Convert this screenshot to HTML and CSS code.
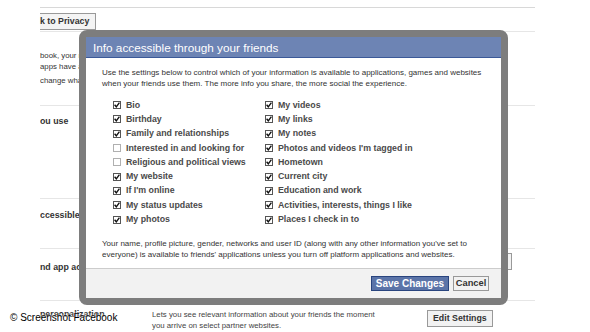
FILE: index.html
```html
<!DOCTYPE html>
<html lang="en">
<head>
    <meta charset="UTF-8">
    <title>Info accessible through your friends</title>
    <link rel="stylesheet" href="styles.css">
</head>
<body>
    <div class="page">
        <div class="back-row">
            <span class="back-btn">k to Privacy</span>
        </div>
        <div class="sec sec-intro">
            <p>book, your name, profile picture and friends</p>
            <p>apps have access to this info</p>
            <p class="gap">change what you share with apps</p>
        </div>
        <div class="sec sec-apps">
            <p class="title">ou use</p>
        </div>
        <div class="sec sec-info">
            <p class="title">ccessible through your friends</p>
        </div>
        <div class="sec sec-platform">
            <p class="title">nd app activity</p>
            <span class="small-btn">Edit</span>
        </div>
        <div class="sec sec-personal">
            <p class="title">personalization</p>
            <p class="desc">Lets you see relevant information about your friends the moment<br>you arrive on select partner websites.</p>
            <span class="edit-btn">Edit Settings</span>
        </div>
    </div>

    <div class="dialog">
        <div class="dialog-inner">
            <div class="dialog-head">Info accessible through your friends</div>
            <div class="dialog-body">
                <p class="intro">Use the settings below to control which of your information is available to applications, games and websites<br>when your friends use them. The more info you share, the more social the experience.</p>
                <div class="checks">
                    <div class="col">
                        <label class="row"><span class="box on"></span>Bio</label>
                        <label class="row"><span class="box on"></span>Birthday</label>
                        <label class="row"><span class="box on"></span>Family and relationships</label>
                        <label class="row"><span class="box"></span>Interested in and looking for</label>
                        <label class="row"><span class="box"></span>Religious and political views</label>
                        <label class="row"><span class="box on"></span>My website</label>
                        <label class="row"><span class="box on"></span>If I'm online</label>
                        <label class="row"><span class="box on"></span>My status updates</label>
                        <label class="row"><span class="box on"></span>My photos</label>
                    </div>
                    <div class="col">
                        <label class="row"><span class="box on"></span>My videos</label>
                        <label class="row"><span class="box on"></span>My links</label>
                        <label class="row"><span class="box on"></span>My notes</label>
                        <label class="row"><span class="box on"></span>Photos and videos I'm tagged in</label>
                        <label class="row"><span class="box on"></span>Hometown</label>
                        <label class="row"><span class="box on"></span>Current city</label>
                        <label class="row"><span class="box on"></span>Education and work</label>
                        <label class="row"><span class="box on"></span>Activities, interests, things I like</label>
                        <label class="row"><span class="box on"></span>Places I check in to</label>
                    </div>
                </div>
                <p class="note">Your name, profile picture, gender, networks and user ID (along with any other information you've set to<br>everyone) is available to friends' applications unless you turn off platform applications and websites.</p>
            </div>
            <div class="dialog-foot">
                <span class="btn btn-save">Save Changes</span>
                <span class="btn btn-cancel">Cancel</span>
            </div>
        </div>
    </div>

    <div class="watermark">© Screenshot Facebook</div>
</body>
</html>
```
FILE: styles.css
```css
html, body {
    margin: 0;
    padding: 0;
}
body {
    width: 590px;
    height: 332px;
    overflow: hidden;
    position: relative;
    background: #fff;
    font-family: "Liberation Sans", Arial, sans-serif;
    color: #333;
}
p {
    margin: 0;
}

/* page behind the dialog */
.page {
    margin-left: 40px;
    width: 495px;
    padding-top: 7px;
    font-size: 7.8px;
    line-height: 11px;
}
.back-row {
    border-top: 1px solid #d8d8d8;
    height: 25px;
    padding-top: 5px;
    box-sizing: border-box;
    border-bottom: 1px solid #e6e6e6;
}
.back-btn {
    display: inline-block;
    height: 15px;
    line-height: 15px;
    padding: 0 6px 0 0;
    background: #f4f4f4;
    border: 1px solid #999;
    border-left: 0;
    font-weight: bold;
    font-size: 8.8px;
    color: #333;
}
.sec {
    position: relative;
    border-bottom: 1px solid #e6e6e6;
    box-sizing: border-box;
    overflow: hidden;
    white-space: nowrap;
}
.sec .title {
    font-weight: bold;
    font-size: 8.8px;
    color: #333;
}
.sec-intro {
    height: 74px;
    padding-top: 18px;
}
.sec-intro .gap {
    margin-top: 3px;
}
.sec-apps {
    height: 93px;
    padding-top: 10px;
}
.sec-info {
    height: 50px;
    padding-top: 11px;
}
.sec-platform {
    height: 52px;
    padding-top: 13px;
}
.small-btn {
    position: absolute;
    left: 430px;
    top: 4px;
    width: 40px;
    height: 15px;
    border: 1px solid #999;
    background: #f2f2f2;
}
.sec-personal {
    height: 40px;
    padding-top: 8px;
    border-bottom: 0;
    display: flex;
}
.sec-personal .title {
    width: 112px;
}
.sec-personal .desc {
    color: #444;
}
.edit-btn {
    position: absolute;
    left: 387px;
    top: 9px;
    height: 15px;
    line-height: 15px;
    padding: 0 5px;
    border: 1px solid #999;
    background: #f2f2f2;
    font-weight: bold;
    font-size: 8.8px;
    color: #333;
}

/* dialog */
.dialog {
    position: absolute;
    left: 79px;
    top: 30px;
    width: 429px;
    height: 275px;
    box-sizing: border-box;
    border: 7px solid #7d7d7d;
    border-radius: 8px;
    background: #7d7d7d;
}
.dialog-inner {
    background: #fff;
    height: 100%;
    display: flex;
    flex-direction: column;
}
.dialog-head {
    height: 21px;
    line-height: 21px;
    background: #6d84b4;
    border-bottom: 1px solid #3b5998;
    box-sizing: border-box;
    padding-left: 7px;
    color: #fff;
    font-size: 11.75px;
}
.dialog-body {
    flex: 1;
    padding: 9px 16px 0;
    font-size: 8px;
    line-height: 11px;
    color: #333;
}
.checks {
    display: flex;
    margin: 9px 0 0 11px;
}
.col {
    width: 152px;
    display: flex;
    flex-direction: column;
}
.row {
    display: flex;
    align-items: center;
    gap: 5px;
    height: 14.3px;
    font-weight: bold;
    font-size: 8.8px;
    color: #4a4a4a;
    white-space: nowrap;
}
.box {
    width: 8px;
    height: 8px;
    box-sizing: border-box;
    border: 1px solid #b0b0b0;
    background: #fff;
    flex: none;
}
.box.on {
    border-color: #555;
    background: #fff url("data:image/svg+xml,%3Csvg xmlns='http://www.w3.org/2000/svg' viewBox='0 0 6 6'%3E%3Cpath d='M0.6 2.8 L2.3 4.8 L5.4 0.7' fill='none' stroke='%23111' stroke-width='1.4'/%3E%3C/svg%3E") center / 6px 6px no-repeat;
}
.note {
    margin-top: 11px;
}
.dialog-foot {
    height: 30px;
    box-sizing: border-box;
    background: #f2f2f2;
    border-top: 1px solid #ccc;
    display: flex;
    align-items: center;
    justify-content: flex-end;
    gap: 4px;
    padding-right: 12px;
}
.btn {
    height: 15px;
    line-height: 13px;
    box-sizing: border-box;
    font-weight: bold;
    font-size: 10px;
    text-align: center;
}
.btn-save {
    width: 78px;
    background: #5b74a8;
    border: 1px solid #29447e;
    color: #fff;
}
.btn-cancel {
    width: 36px;
    background: #f2f2f2;
    border: 1px solid #999;
    color: #333;
    font-size: 9.3px;
}

.watermark {
    position: absolute;
    left: 10px;
    top: 312px;
    font-size: 10px;
    color: #000;
    text-shadow: 0 0 2px #fff, 0 0 2px #fff;
}
```
